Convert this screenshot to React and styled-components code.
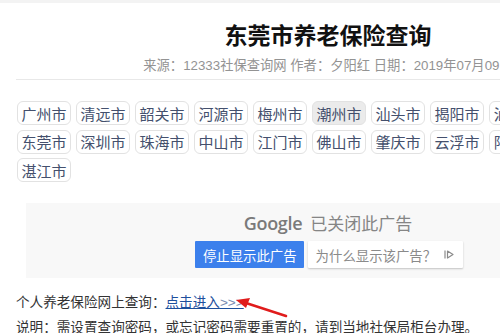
import styled, { createGlobalStyle } from 'styled-components'

const GlobalStyle = createGlobalStyle`
    html, body {
        margin: 0;
        padding: 0;
        background: #ffffff;
        overflow: hidden;
        font-family: "Liberation Sans", "Noto Sans CJK SC", sans-serif;
    }
`

const TopBand = styled.div`
    height: 3px;
    background: #f3f3f3;
`

const Page = styled.div`
    width: 624px;
    margin-left: 16px;
    position: relative;
`

const Title = styled.h1`
    margin: 18px 0 0;
    font-size: 23px;
    line-height: 30px;
    font-weight: bold;
    text-align: center;
    color: #111111;
`

const Meta = styled.div`
    margin-top: 5px;
    font-size: 13.3px;
    line-height: 20px;
    color: #939393;
    text-align: center;
    white-space: nowrap;
    padding-bottom: 3px;
    border-bottom: 1px solid #e8e8e8;
`

const TagList = styled.div`
    display: flex;
    flex-wrap: wrap;
    gap: 4.5px 5px;
    margin-top: 21px;
    padding-left: 1px;
`

const Tag = styled.span`
    height: 24px;
    box-sizing: border-box;
    padding: 0 3.5px;
    display: flex;
    align-items: center;
    font-size: 15px;
    color: #44506d;
    border: 1px solid #e2e2e2;
    border-radius: 6px;
    background: ${props => props.active ? '#ebebeb' : '#ffffff'};
`

const AdBox = styled.div`
    margin: 21px 10px 0;
    height: 75px;
    background: #f8f8f8;
    display: flex;
    flex-direction: column;
    align-items: center;
`

const AdTitle = styled.div`
    margin-top: 9px;
    display: flex;
    align-items: baseline;
    gap: 8px;
    color: #858585;
    font-size: 17px;
    line-height: 22px;

    .google {
        font-family: "Open Sans", "Roboto", sans-serif;
        font-weight: 600;
        font-size: 18px;
        color: #7a7a7a;
        letter-spacing: -0.3px;
    }
`

const AdButtons = styled.div`
    margin-top: 5px;
    margin-left: 2px;
    display: flex;
    gap: 4px;
`

const AdButton = styled.div`
    height: 27px;
    box-sizing: border-box;
    display: flex;
    align-items: center;
    gap: 8px;
    padding: 0 ${props => props.primary ? '7px' : '9px'} 0 8px;
    font-size: 13.4px;
    color: ${props => props.primary ? '#ffffff' : '#8a8a8a'};
    background: ${props => props.primary ? '#3c80ec' : '#ffffff'};
    box-shadow: ${props => props.primary ? 'none' : '0 1px 2px rgba(0,0,0,0.22)'};
    border-radius: 1px;
`

const Lines = styled.div`
    margin-top: 12px;
    font-size: 13.6px;
    line-height: 25px;
    color: #333333;
    position: relative;
`

const Line = styled.div`
    white-space: nowrap;
`

const Link = styled.a`
    color: #1d4f9c;
    text-decoration: underline;

    .more {
        color: #7b8cb0;
    }
`

const Arrow = styled.svg`
    position: absolute;
    left: 216px;
    top: 5px;
`

const AdChoices = () => (
    <svg width="10" height="11" viewBox="0 0 10 11">
        <line x1="1" y1="1.5" x2="1" y2="9.5" stroke="#8a8a8a" strokeWidth="1.2" />
        <path d="M3.5 2 L9 5.5 L3.5 9 Z" fill="none" stroke="#8a8a8a" strokeWidth="1.2" strokeLinejoin="round" />
    </svg>
)

const cities = [
    '广州市', '清远市', '韶关市', '河源市', '梅州市', '潮州市', '汕头市', '揭阳市', '汕尾市', '惠州市',
    '东莞市', '深圳市', '珠海市', '中山市', '江门市', '佛山市', '肇庆市', '云浮市', '阳江市', '茂名市',
    '湛江市',
]

const App = () => {
    return (
        <>
            <GlobalStyle />
            <TopBand />
            <Page>
                <Title>东莞市养老保险查询</Title>
                <Meta>来源：12333社保查询网 作者：夕阳红 日期：2019年07月09日</Meta>
                <TagList>
                    {cities.map(city => (
                        <Tag key={city} active={city === '潮州市'}>{city}</Tag>
                    ))}
                </TagList>
                <AdBox>
                    <AdTitle>
                        <span className='google'>Google</span>
                        <span>已关闭此广告</span>
                    </AdTitle>
                    <AdButtons>
                        <AdButton primary>停止显示此广告</AdButton>
                        <AdButton>为什么显示该广告？<AdChoices /></AdButton>
                    </AdButtons>
                </AdBox>
                <Lines>
                    <Line>个人养老保险网上查询：<Link href='#'>点击进入<span className='more'>&gt;&gt;&gt;</span></Link></Line>
                    <Line>说明：需设置查询密码，或忘记密码需要重置的，请到当地社保局柜台办理。</Line>
                    <Arrow width="60" height="24" viewBox="0 0 60 24">
                        <line x1="54" y1="21" x2="14" y2="8" stroke="#e01c1c" strokeWidth="2.5" strokeLinecap="round" />
                        <path d="M4 5 L18 3 L14 13 Z" fill="#e01c1c" />
                    </Arrow>
                </Lines>
            </Page>
        </>
    )
}

export default App
